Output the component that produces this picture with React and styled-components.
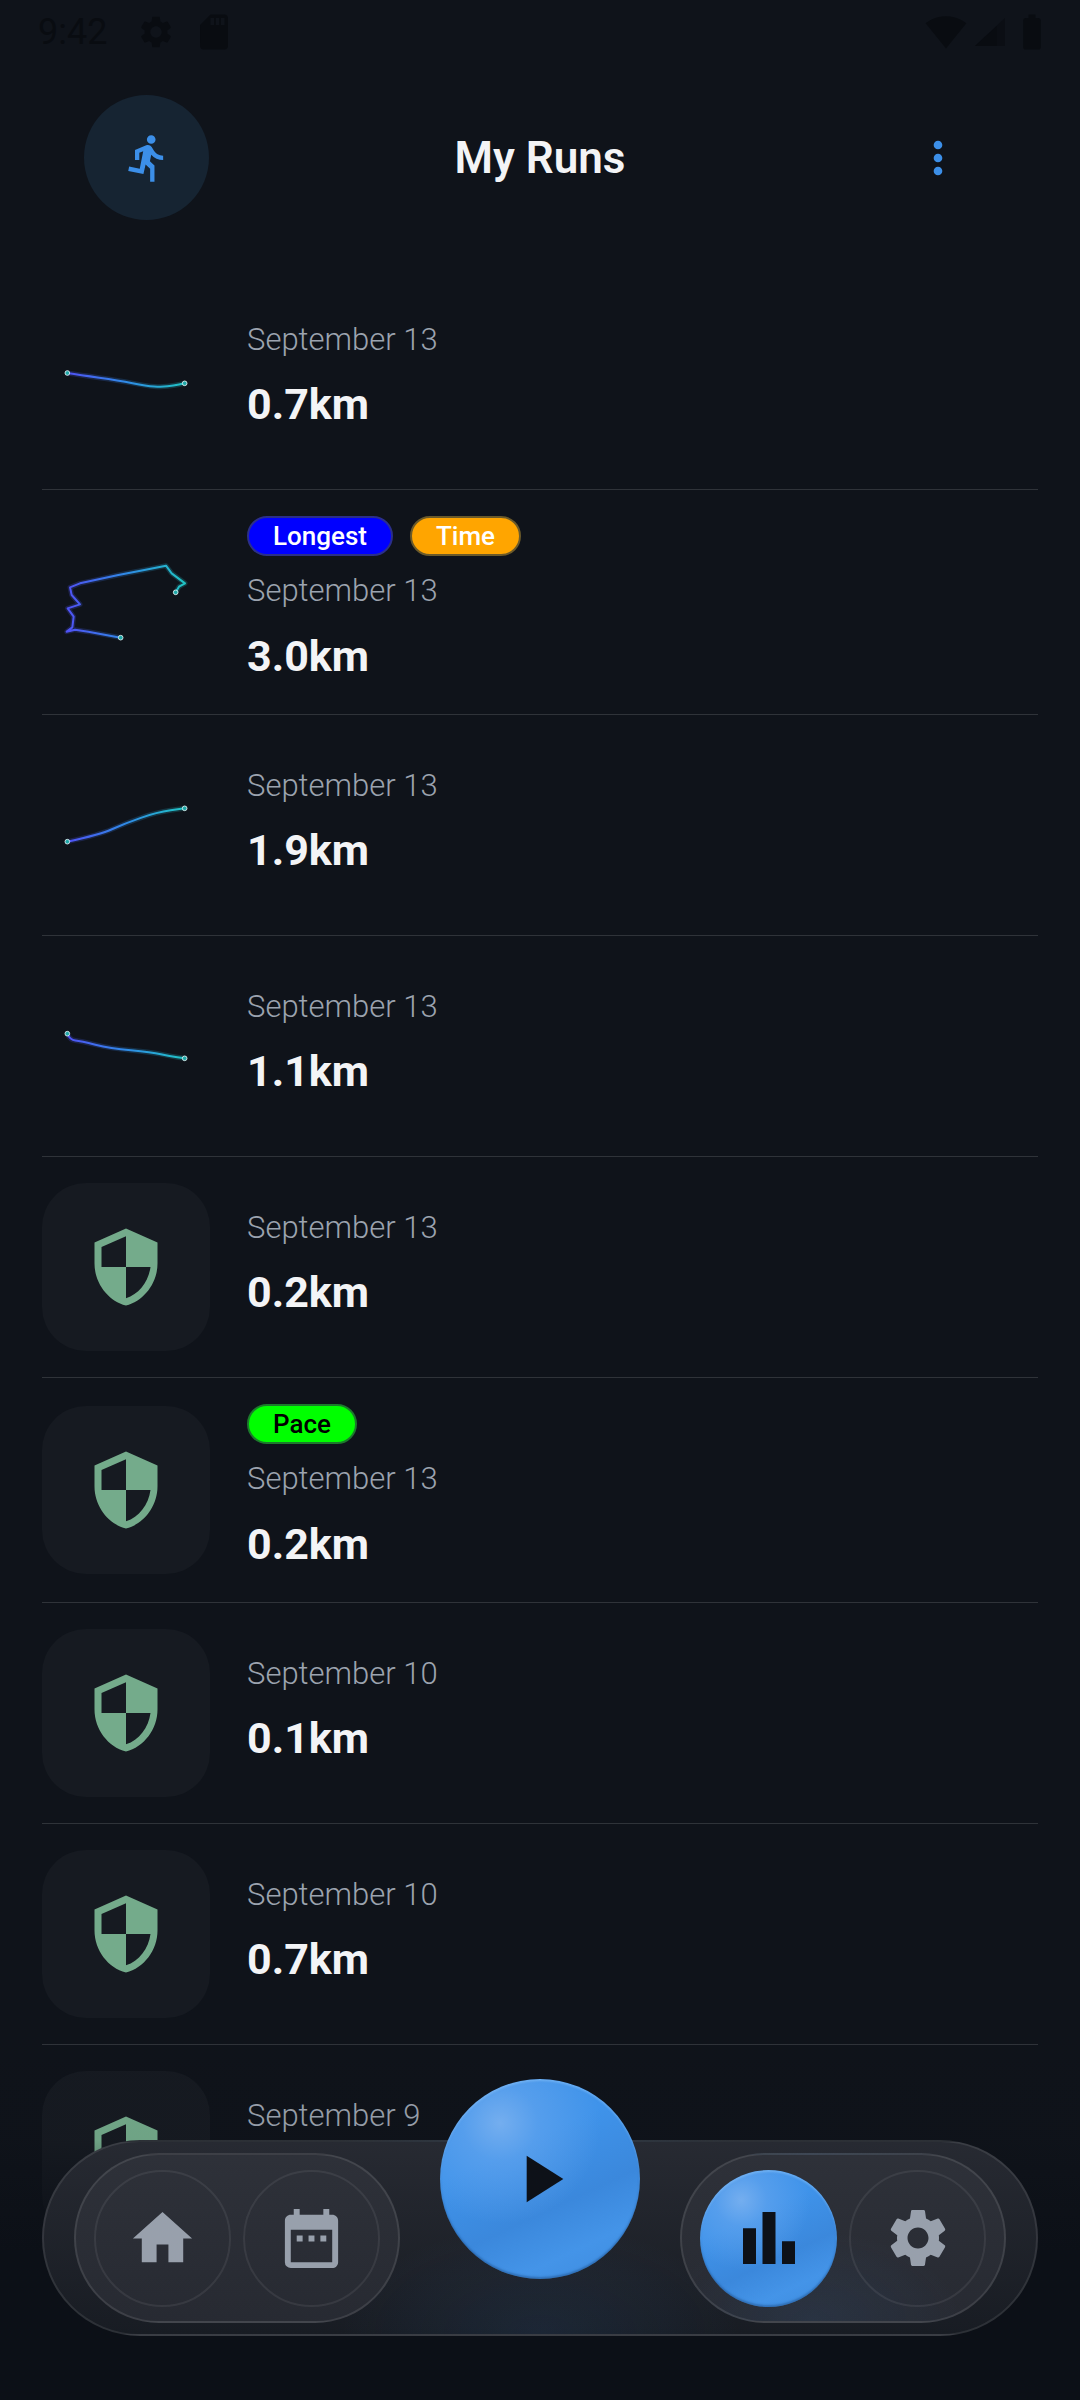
import React from "react";
import styled, { createGlobalStyle } from "styled-components";
import {
  MdDirectionsRun,
  MdMoreVert,
  MdSecurity,
  MdHome,
  MdDateRange,
  MdBarChart,
  MdSettings,
  MdPlayArrow,
  MdSdCard,
  MdSignalWifi4Bar,
  MdBatteryFull,
} from "react-icons/md";

const GlobalStyle = createGlobalStyle`
  html, body { margin: 0; padding: 0; background: #0f131a; }
  * { box-sizing: border-box; }
`;

const Screen = styled.div`
  position: relative;
  width: 1080px;
  height: 2400px;
  overflow: hidden;
  background: #0f131a;
  font-family: Roboto, "Liberation Sans", sans-serif;
`;

const StatusBar = styled.div`
  height: 66px;
  display: flex;
  align-items: center;
  justify-content: space-between;
  padding: 0 27px 2px 38px;
  color: #090c11;
`;
const StatusGroup = styled.div`
  display: flex;
  align-items: center;
  gap: ${(p) => p.$gap}px;
`;
const Clock = styled.span`
  font-size: 36px;
  font-weight: 400;
  width: 72px;
  margin-right: 27px;
  line-height: 1;
`;
const StatusGear = styled(MdSettings)`
  width: 38px;
  height: 38px;
  margin-right: 18px;
`;
const StatusCard = styled(MdSdCard)`
  width: 42px;
  height: 42px;
`;
const StatusWifi = styled(MdSignalWifi4Bar)`
  width: 42px;
  height: 42px;
`;
const SignalGlyph = styled.svg`
  width: 32px;
  height: 32px;
`;
const StatusBattery = styled(MdBatteryFull)`
  width: 42px;
  height: 42px;
`;

const Header = styled.header`
  display: grid;
  grid-template-columns: 1fr auto 1fr;
  align-items: center;
  padding: 29px 84px 49px;
`;
const AvatarCircle = styled.div`
  width: 125px;
  height: 125px;
  border-radius: 50%;
  background: #162432;
  display: flex;
  align-items: center;
  justify-content: center;
`;
const RunIcon = styled(MdDirectionsRun)`
  width: 52px;
  height: 52px;
  color: #3c8fe8;
  margin-left: 2px;
`;
const Title = styled.h1`
  margin: 0;
  font-size: 44px;
  font-weight: 600;
  line-height: 1;
  color: #f3f4f6;
`;
const MenuIcon = styled(MdMoreVert)`
  justify-self: end;
  width: 52px;
  height: 52px;
  margin-right: 32px;
  color: #3c8fe8;
`;

const List = styled.div`
  padding: 0 42px;
`;
const Row = styled.div`
  display: flex;
  align-items: center;
  gap: 37px;
  padding: 26px 0;
  border-bottom: 1px solid #2f3339;
`;
const Thumb = styled.div`
  width: 168px;
  height: 168px;
  flex: none;
  border-radius: 44px;
  display: flex;
  align-items: center;
  justify-content: center;
  background: ${(p) => (p.$filled ? "#161a21" : "transparent")};
`;
const Route = styled.svg`
  width: 168px;
  height: 168px;
  display: block;
  overflow: visible;
`;
const ShieldIcon = styled(MdSecurity)`
  width: 84px;
  height: 84px;
  color: #74ab8b;
`;
const Info = styled.div`
  display: flex;
  flex-direction: column;
  padding-bottom: ${(p) => (p.$badged ? 4.5 : 6.5)}px;
`;
const Badges = styled.div`
  display: flex;
  gap: 17px;
  margin-bottom: 15px;
`;
const Badge = styled.span`
  height: 40px;
  padding: 0 24px;
  border-radius: 20px;
  display: flex;
  align-items: center;
  font-size: 26px;
  font-weight: 500;
  background: ${(p) => p.$bg};
  color: ${(p) => p.$fg};
  border: 2px solid ${(p) => p.$edge};
`;
const DateText = styled.div`
  font-size: 31px;
  line-height: 40px;
  font-weight: 300;
  color: #9ca3af;
`;
const Distance = styled.div`
  margin-top: 16.5px;
  font-size: 43px;
  line-height: 56px;
  font-weight: 700;
  color: #f3f4f6;
`;

const BottomFade = styled.div`
  position: absolute;
  left: 0;
  right: 0;
  bottom: 0;
  height: 420px;
  background: linear-gradient(to bottom, rgba(11, 14, 20, 0), rgba(11, 14, 20, 0.05) 38%, #0c1017 65%);
  pointer-events: none;
`;

const Nav = styled.nav`
  position: absolute;
  left: 42px;
  bottom: 64px;
  width: 996px;
  height: 196px;
  padding: 0 30px;
  border-radius: 98px;
  display: flex;
  align-items: center;
  justify-content: space-between;
  border: 2px solid rgba(255, 255, 255, 0.09);
  background:
    radial-gradient(ellipse 200px 110px at 50% 100%, rgba(60, 130, 210, 0.1), transparent),
    linear-gradient(to bottom, #272a32, #181c23);
`;
const NavGroup = styled.div`
  width: 326px;
  height: 170px;
  padding: 0 18px;
  border-radius: 85px;
  display: flex;
  align-items: center;
  gap: 12px;
  border: 2px solid rgba(255, 255, 255, 0.1);
  background:
    radial-gradient(ellipse 150px 90px at ${(p) => p.$glow || "-40%"} 100%, rgba(60, 130, 210, 0.1), transparent),
    linear-gradient(to bottom, #2e3139, #272a32);
`;
const NavButton = styled.div`
  width: 137px;
  height: 137px;
  flex: none;
  border-radius: 50%;
  display: flex;
  align-items: center;
  justify-content: center;
  border: 2px solid rgba(255, 255, 255, 0.07);
  color: #98a0ac;
`;
const Ball = styled.div`
  display: flex;
  align-items: center;
  justify-content: center;
  border-radius: 50%;
  color: #0d1118;
  background:
    radial-gradient(circle at 30% 22%, #74aeef 0%, rgba(100, 165, 238, 0.6) 18%, rgba(62, 143, 230, 0) 48%),
    linear-gradient(155deg, #3f93ea 35%, #3b88dc 62%, #4494e8 80%, #3d8bde 100%);
  box-shadow: inset 0 -2px 2px rgba(30, 80, 140, 0.5), inset 0 2px 2px rgba(140, 195, 250, 0.5);
`;
const ActiveButton = styled(Ball)`
  width: 137px;
  height: 137px;
  flex: none;
`;
const PlayButton = styled(Ball)`
  position: absolute;
  left: 50%;
  top: -63px;
  width: 200px;
  height: 200px;
  transform: translateX(-50%);
`;
const NavHome = styled(MdHome)`
  width: 71px;
  height: 71px;
`;
const NavCalendar = styled(MdDateRange)`
  width: 71px;
  height: 71px;
`;
const NavSettings = styled(MdSettings)`
  width: 70px;
  height: 70px;
`;
const NavBars = styled(MdBarChart)`
  width: 78px;
  height: 78px;
`;
const NavPlay = styled(MdPlayArrow)`
  width: 80px;
  height: 80px;
`;

const routes = [
  {
    box: "36 -48 504 504",
    pts: [[112, 186], [150, 192], [265, 208], [350, 225], [395, 228], [430, 224], [464, 217]],
    smooth: true,
  },
  {
    box: "36 624 504 504",
    pts: [[272, 983], [175, 965], [135, 959], [110, 965], [127, 952], [131, 920], [113, 895], [150, 883], [125, 855], [120, 832], [150, 820], [265, 795], [343, 780], [408, 767], [425, 790], [465, 820], [447, 830], [437, 847]],
    smooth: false,
  },
  {
    box: "36 63 504 504",
    pts: [[112, 365], [210, 344], [285, 310], [380, 277], [464, 265]],
    smooth: true,
  },
  {
    box: "36 726 504 504",
    pts: [[112, 941], [120, 960], [152, 963], [240, 985], [365, 997], [420, 1008], [464, 1015]],
    smooth: true,
  },
];

function routePath(pts, smooth) {
  if (!smooth) return "M" + pts.map((p) => p.join(" ")).join("L");
  let d = `M${pts[0][0]} ${pts[0][1]}`;
  for (let i = 1; i < pts.length - 1; i++) {
    const mx = (pts[i][0] + pts[i + 1][0]) / 2;
    const my = (pts[i][1] + pts[i + 1][1]) / 2;
    d += `Q${pts[i][0]} ${pts[i][1]} ${mx} ${my}`;
  }
  const last = pts[pts.length - 1];
  return d + `L${last[0]} ${last[1]}`;
}

function RouteMap({ index }) {
  const r = routes[index];
  const id = `route-grad-${index}`;
  const d = routePath(r.pts, r.smooth);
  const ends = [r.pts[0], r.pts[r.pts.length - 1]];
  return (
    <Route viewBox={r.box}>
      <defs>
        <linearGradient id={id} gradientUnits="userSpaceOnUse" x1="112" y1="0" x2="464" y2="0">
          <stop offset="0" stopColor="#4f52f5" />
          <stop offset="0.5" stopColor="#2f8ae6" />
          <stop offset="1" stopColor="#20c4c4" />
        </linearGradient>
      </defs>
      <path d={d} fill="none" stroke={`url(#${id})`} strokeOpacity="0.22" strokeWidth="15" strokeLinejoin="round" strokeLinecap="round" />
      <path d={d} fill="none" stroke={`url(#${id})`} strokeWidth="6" strokeLinejoin="round" strokeLinecap="round" />
      {ends.map(([x, y]) => (
        <circle key={x} cx={x} cy={y} r="7" fill="#1fa8a8" stroke="#e8f4f4" strokeWidth="2.5" />
      ))}
    </Route>
  );
}

const runs = [
  { date: "September 13", km: "0.7km", route: 0 },
  {
    date: "September 13",
    km: "3.0km",
    route: 1,
    badges: [
      { t: "Longest", bg: "#0000ff", fg: "#ffffff", edge: "#2b2f8a" },
      { t: "Time", bg: "#ffa500", fg: "#ffffff", edge: "#6b5a2a" },
    ],
  },
  { date: "September 13", km: "1.9km", route: 2 },
  { date: "September 13", km: "1.1km", route: 3 },
  { date: "September 13", km: "0.2km" },
  {
    date: "September 13",
    km: "0.2km",
    badges: [{ t: "Pace", bg: "#00ff00", fg: "#000000", edge: "#1c7a2c" }],
  },
  { date: "September 10", km: "0.1km" },
  { date: "September 10", km: "0.7km" },
  { date: "September 9", km: "0.4km" },
];

export default function App() {
  return (
    <Screen>
      <GlobalStyle />
      <StatusBar>
        <StatusGroup $gap={0}>
          <Clock>9:42</Clock>
          <StatusGear />
          <StatusCard />
        </StatusGroup>
        <StatusGroup $gap={6}>
          <StatusWifi />
          <SignalGlyph viewBox="0 0 32 32">
            <path d="M32 2v28H2z" fill="#0b0e14" />
            <path d="M24 10v20H2z" fill="#090c11" />
          </SignalGlyph>
          <StatusBattery />
        </StatusGroup>
      </StatusBar>

      <Header>
        <AvatarCircle>
          <RunIcon />
        </AvatarCircle>
        <Title>My Runs</Title>
        <MenuIcon />
      </Header>

      <List>
        {runs.map((run, i) => (
          <Row key={i}>
            <Thumb $filled={run.route === undefined}>
              {run.route !== undefined ? <RouteMap index={run.route} /> : <ShieldIcon />}
            </Thumb>
            <Info $badged={Boolean(run.badges)}>
              {run.badges && (
                <Badges>
                  {run.badges.map((b) => (
                    <Badge key={b.t} $bg={b.bg} $fg={b.fg} $edge={b.edge}>
                      {b.t}
                    </Badge>
                  ))}
                </Badges>
              )}
              <DateText>{run.date}</DateText>
              <Distance>{run.km}</Distance>
            </Info>
          </Row>
        ))}
      </List>

      <BottomFade />

      <Nav>
        <NavGroup>
          <NavButton>
            <NavHome />
          </NavButton>
          <NavButton>
            <NavCalendar />
          </NavButton>
        </NavGroup>
        <PlayButton>
          <NavPlay />
        </PlayButton>
        <NavGroup $glow="40%">
          <ActiveButton>
            <NavBars />
          </ActiveButton>
          <NavButton>
            <NavSettings />
          </NavButton>
        </NavGroup>
      </Nav>
    </Screen>
  );
}
